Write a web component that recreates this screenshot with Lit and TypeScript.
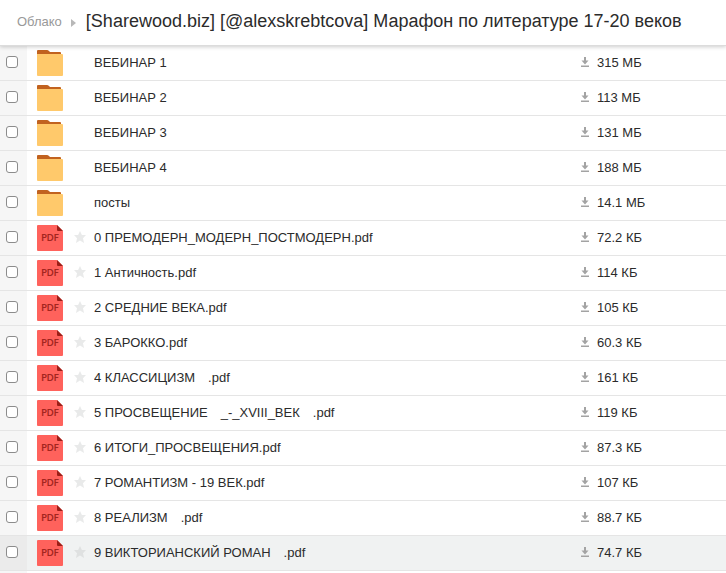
import { LitElement, html, css, svg } from "lit";
import { customElement, property } from "lit/decorators.js";

interface Entry {
  name: string;
  size: string;
  kind: "folder" | "pdf";
  active?: boolean;
}

const ENTRIES: Entry[] = [
  { name: "ВЕБИНАР 1", size: "315 МБ", kind: "folder" },
  { name: "ВЕБИНАР 2", size: "113 МБ", kind: "folder" },
  { name: "ВЕБИНАР 3", size: "131 МБ", kind: "folder" },
  { name: "ВЕБИНАР 4", size: "188 МБ", kind: "folder" },
  { name: "посты", size: "14.1 МБ", kind: "folder" },
  { name: "0 ПРЕМОДЕРН_МОДЕРН_ПОСТМОДЕРН.pdf", size: "72.2 КБ", kind: "pdf" },
  { name: "1 Античность.pdf", size: "114 КБ", kind: "pdf" },
  { name: "2 СРЕДНИЕ ВЕКА.pdf", size: "105 КБ", kind: "pdf" },
  { name: "3 БАРОККО.pdf", size: "60.3 КБ", kind: "pdf" },
  { name: "4 КЛАССИЦИЗМ\u2003.pdf", size: "161 КБ", kind: "pdf" },
  { name: "5 ПРОСВЕЩЕНИЕ\u2003_-_XVIII_ВЕК\u2003.pdf", size: "119 КБ", kind: "pdf" },
  { name: "6 ИТОГИ_ПРОСВЕЩЕНИЯ.pdf", size: "87.3 КБ", kind: "pdf" },
  { name: "7 РОМАНТИЗМ - 19 ВЕК.pdf", size: "107 КБ", kind: "pdf" },
  { name: "8 РЕАЛИЗМ\u2003.pdf", size: "88.7 КБ", kind: "pdf" },
  { name: "9 ВИКТОРИАНСКИЙ РОМАН\u2003.pdf", size: "74.7 КБ", kind: "pdf", active: true },
];

const folderIcon = svg`
  <path d="M0 5V1Q0 0 1 0H10Q11 0 12 1L13 2H23Q24 2 24 3V5Z" fill="#c1621f" />
  <path d="M0 4H25Q26 4 26 5V25Q26 26 25 26H1Q0 26 0 25Z" fill="#ffc96b" />
`;

const pdfIcon = svg`
  <path d="M1 0H20L26 6V25Q26 26 25 26H1Q0 26 0 25V1Q0 0 1 0Z" fill="#ff625c" />
  <path d="M20 0L26 6H21Q20 6 20 5Z" fill="#9c1f18" />
`;

@customElement("file-icon")
export class FileIcon extends LitElement {
  @property() kind = "folder";

  static styles = css`
    :host {
      display: grid;
      width: 26px;
      height: 26px;
    }
    .shape,
    .label {
      grid-area: 1 / 1;
    }
    .label {
      text-align: center;
      font: bold 9px/26px Lato, "Open Sans", sans-serif;
      color: #a2251e;
    }
  `;

  render() {
    const pdf = this.kind === "pdf";
    return html`
      <svg class="shape" width="26" height="26" viewBox="0 0 26 26" aria-hidden="true">
        ${pdf ? pdfIcon : folderIcon}
      </svg>
      ${pdf ? html`<span class="label">PDF</span>` : null}
    `;
  }
}

@customElement("app-root")
export class AppRoot extends LitElement {
  static styles = css`
    :host {
      display: block;
      background: #fff;
      color: #2b2b2b;
      font: 13px/16px "Liberation Sans", Arial, sans-serif;
    }
    .top {
      position: relative;
      display: flex;
      align-items: center;
      height: 46px;
      box-sizing: border-box;
      padding: 0 17px 3px;
      border-bottom: 1px solid #dcdcdc;
      box-shadow: 0 1px 4px rgba(0, 0, 0, 0.2);
      background: #fff;
      white-space: nowrap;
    }
    .crumb {
      color: #999;
      text-decoration: none;
      padding-top: 2px;
    }
    .arrow {
      margin: 3px 10px 0 9px;
      fill: #b8b8b8;
    }
    .title {
      margin: 0;
      font-size: 18px;
      line-height: 24px;
      font-weight: normal;
    }
    .files {
      width: 100%;
      border-collapse: collapse;
      table-layout: fixed;
    }
    .files td {
      height: 34px;
      padding: 0;
      border-bottom: 1px solid #e5e5e5;
      vertical-align: middle;
    }
    .files .pick {
      width: 27px;
      background: #f6f6f6;
    }
    .kind {
      width: 45px;
    }
    .fav {
      width: 22px;
    }
    .size {
      width: 145px;
    }
    .active td {
      background: #f0f2f2;
    }
    .files .active .pick {
      background: #ebebeb;
    }
    .box {
      appearance: none;
      display: block;
      width: 12px;
      height: 12px;
      box-sizing: border-box;
      margin: 0 0 2px 6px;
      border: 1px solid #8c8c8c;
      border-radius: 3px;
      background: #fff;
    }
    .box:checked {
      background: #168de2;
    }
    .icon {
      margin-left: 10px;
    }
    .btn {
      display: block;
      padding: 0;
      border: 0;
      background: none;
      color: #e9eaea;
    }
    .star {
      margin-left: 2px;
      padding-bottom: 2px;
    }
    .btn svg {
      display: block;
      fill: currentColor;
    }
    .active .star {
      color: #dfe1e1;
    }
    .name {
      overflow: hidden;
      white-space: pre;
    }
    .link {
      color: inherit;
      text-decoration: none;
    }
    .load {
      display: flex;
      align-items: center;
      gap: 8px;
      font: inherit;
      color: #2b2b2b;
    }
    .load svg {
      fill: #a3a3a3;
    }
    .rest {
      width: 27px;
      height: 2px;
      background: #f6f6f6;
    }
  `;

  private row(f: Entry) {
    return html`
      <tr class=${f.active ? "active" : ""}>
        <td class="pick"><input class="box" type="checkbox" aria-label=${f.name} /></td>
        <td class="kind"><file-icon class="icon" kind=${f.kind}></file-icon></td>
        <td class="fav">
          ${f.kind === "pdf"
            ? html`<button class="btn star" aria-label="В избранное">
                <svg width="12" height="12" viewBox="0 0 12 12">
                  <path d="M6 0L7.9 4H12L9 7.2L10 12L6 9.6L2 12L3 7.2L0 4H4.1Z" />
                </svg>
              </button>`
            : null}
        </td>
        <td class="name"><a class="link" href="#">${f.name}</a></td>
        <td class="size">
          <button class="btn load">
            <svg width="8" height="12" viewBox="0 0 8 12" aria-hidden="true">
              <path d="M3 0H5V3.5H7.5L4 7.5L0.5 3.5H3ZM0 8.5H8V10H0Z" />
            </svg>
            <span>${f.size}</span>
          </button>
        </td>
      </tr>
    `;
  }

  render() {
    return html`
      <header class="top">
        <a class="crumb" href="#">Облако</a>
        <svg class="arrow" width="5" height="8" viewBox="0 0 5 8" aria-hidden="true">
          <path d="M0 0L5 4L0 8Z" />
        </svg>
        <h1 class="title">[Sharewood.biz] [@alexskrebtcova] Марафон по литературе 17-20 веков</h1>
      </header>
      <table class="files">
        <tbody>
          ${ENTRIES.map((f) => this.row(f))}
        </tbody>
      </table>
      <div class="rest"></div>
    `;
  }
}
